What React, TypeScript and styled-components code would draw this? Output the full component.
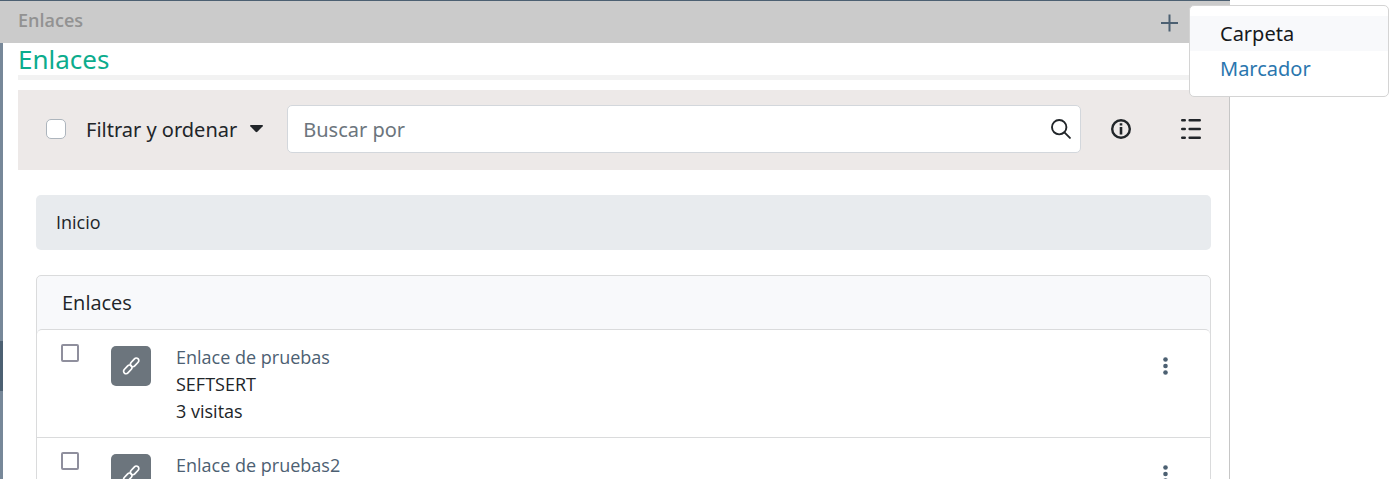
import React from 'react';
import styled, { createGlobalStyle } from 'styled-components';

const GlobalStyle = createGlobalStyle`
  *, *::before, *::after { box-sizing: border-box; }
  html { scrollbar-width: none; }
  body {
    margin: 0;
    background: #fff;
    color: #212529;
    font-family: "Open Sans", "Noto Sans", sans-serif;
    font-size: 18px;
    line-height: 27px;
  }
  button, input { font: inherit; color: inherit; }
`;

const controlFont = '"Noto Sans", "Open Sans", sans-serif';

const Panel = styled.div`
  position: relative;
  display: flex;
  flex-direction: column;
  min-height: 100vh;
  margin-right: 164px;
  border-top: 1px solid #4c6072;
`;

const TitleBar = styled.header`
  display: flex;
  align-items: center;
  justify-content: space-between;
  flex: none;
  height: 42px;
  padding: 0 51px 0 18px;
  background: #cbcbcb;
`;

const BarTitle = styled.span`
  height: 42px;
  color: #929292;
  font-size: 18px;
  font-weight: 600;
  line-height: 38px;
`;

const IconButton = styled.button<{ $color?: string }>`
  display: flex;
  align-items: center;
  justify-content: center;
  flex: none;
  padding: 0;
  border: 0;
  background: transparent;
  color: ${(p) => p.$color ?? '#212529'};
  cursor: pointer;
`;

const Menu = styled.nav`
  position: absolute;
  top: 4px;
  right: -159px;
  z-index: 2;
  display: flex;
  flex-direction: column;
  width: 200px;
  padding: 10px 0;
  border: 1px solid #d4d4d4;
  border-radius: 5px;
  background: #fff;
`;

const MenuLink = styled.a<{ $active?: boolean }>`
  padding: 0 30px;
  color: ${(p) => (p.$active ? '#16181b' : '#2a76ae')};
  background: ${(p) => (p.$active ? '#f8f9fb' : 'transparent')};
  font-family: ${controlFont};
  font-size: 20px;
  line-height: 35px;
  text-decoration: none;
`;

const Body = styled.div`
  display: flex;
  flex: 1;
  border-right: 1px solid #c6c6c6;
`;

const Rail = styled.div`
  flex: none;
  width: 3px;
  padding-top: 298px;
  background: #778899;
`;

const RailMark = styled.div`
  height: 50px;
  background: #4c6072;
`;

const Content = styled.main`
  flex: 1;
  min-width: 0;
  padding-left: 15px;
`;

const Heading = styled.h1`
  margin: 0 0 10px;
  border-bottom: 5px solid #f2f2f2;
  color: #0cac8d;
  font-family: ${controlFont};
  font-size: 26px;
  font-weight: 400;
  line-height: 32px;
`;

const Toolbar = styled.div`
  display: flex;
  align-items: center;
  height: 80px;
  padding: 0 28px 2px;
  background: #ede9e8;
`;

const Check = styled.input<{ $size: number; $border: string; $radius: number }>`
  appearance: none;
  flex: none;
  width: ${(p) => p.$size}px;
  height: ${(p) => p.$size}px;
  margin: 0;
  border: ${(p) => p.$border};
  border-radius: ${(p) => p.$radius}px;
  background: #fff;
`;

const FilterButton = styled.button`
  display: flex;
  align-items: center;
  gap: 13px;
  margin: 0 24px 0 20px;
  padding: 0;
  border: 0;
  background: transparent;
  font-family: ${controlFont};
  font-size: 20px;
  white-space: nowrap;
`;

const SearchBox = styled.form`
  display: flex;
  align-items: center;
  flex: 1;
  min-width: 0;
  height: 48px;
  margin-right: 30px;
  padding: 0 9px 0 15px;
  border: 1px solid #d3d7dc;
  border-radius: 5px;
  background: #fff;
`;

const SearchInput = styled.input`
  flex: 1;
  min-width: 0;
  padding: 0;
  border: 0;
  outline: 0;
  background: transparent;
  font-family: ${controlFont};
  font-size: 20px;
  &::placeholder { color: #6c757d; opacity: 1; }
`;

const Tools = styled.div`
  display: flex;
  gap: 50px;
`;

const Breadcrumb = styled.nav`
  margin: 25px 18px;
  padding: 14px 20px;
  border-radius: 5px;
  background: #e8ebee;
  a { color: #212529; text-decoration: none; }
`;

const Card = styled.section`
  margin: 0 18px;
  border: 1px solid #dadbdc;
  border-radius: 5px;
  background: #f8f9fb;
`;

const CardTitle = styled.h2`
  margin: 0;
  padding: 0 25px;
  font-size: 20px;
  font-weight: 400;
  line-height: 53px;
`;

const List = styled.ul`
  margin: 0;
  padding: 0;
  list-style: none;
  border-top: 1px solid #dadbdc;
  border-radius: 5px;
  background: #fff;
`;

const Row = styled.li`
  display: flex;
  align-items: flex-start;
  height: 108px;
  padding: 14px 37px 0 24px;
  border-bottom: 1px solid #dadbdc;
`;

const Thumb = styled.div`
  display: flex;
  align-items: center;
  justify-content: center;
  flex: none;
  width: 40px;
  height: 40px;
  margin: 2px 25px 0 32px;
  border-radius: 5px;
  background: #6c757d;
  color: #fff;
`;

const RowText = styled.div`
  flex: 1;
  min-width: 0;
  a { color: #4c6072; text-decoration: none; }
  p { margin: 0; }
`;

const RowAction = styled(IconButton)`
  width: 16px;
  height: 20px;
  margin-top: 12px;
`;

const PlusIcon = () => (
  <svg width="19" height="19" viewBox="0 0 19 19" fill="none" stroke="currentColor" strokeWidth="2">
    <path d="M9.5 1.5v17M1 10h17" />
  </svg>
);

const CaretIcon = () => (
  <svg width="13" height="8" viewBox="0 0 13 8" fill="currentColor">
    <path d="M.7 0h11.6q1 .3.4 1.2L7.4 6.7q-.9.9-1.8 0L.3 1.2Q-.2.3.7 0z" />
  </svg>
);

const SearchIcon = () => (
  <svg width="20" height="20" viewBox="0 0 20 20" fill="none" stroke="currentColor" strokeWidth="1.9" strokeLinecap="round">
    <circle cx="8.2" cy="8.2" r="7.2" />
    <path d="M13.4 13.4l5.5 5.5" />
  </svg>
);

const InfoIcon = () => (
  <svg width="20" height="20" viewBox="0 0 20 20" fill="none" stroke="currentColor" strokeWidth="2.4">
    <circle cx="10" cy="10" r="8.8" />
    <path d="M10 8v7.5M10 4.2v2.3" strokeWidth="2.6" />
  </svg>
);

const ListIcon = () => (
  <svg width="20" height="20" viewBox="0 0 20 20" fill="none" stroke="currentColor" strokeWidth="2.4" strokeLinecap="round">
    <path d="M1.2 1.3h2.6M8.6 1.3h10.2M1.2 10h2.6M8.6 10h10.2M1.2 18.7h2.6M8.6 18.7h10.2" />
  </svg>
);

const LinkIcon = () => (
  <svg width="18" height="18" viewBox="0 0 18 18" fill="none" stroke="currentColor" strokeWidth="1.7">
    <rect x="-5" y="-2.5" width="10" height="5" rx="2.5" transform="translate(12.6 5.4) rotate(-47)" />
    <rect x="-5" y="-2.5" width="10" height="5" rx="2.5" transform="translate(5.8 12.4) rotate(-47)" />
  </svg>
);

const DotsIcon = () => (
  <svg width="5" height="18" viewBox="0 0 5 18" fill="currentColor">
    <circle cx="2.5" cy="2.5" r="2.3" />
    <circle cx="2.5" cy="9" r="2.3" />
    <circle cx="2.5" cy="15.5" r="2.3" />
  </svg>
);

const links = [
  { title: 'Enlace de pruebas', description: 'SEFTSERT', visits: '3 visitas' },
  { title: 'Enlace de pruebas2' },
];

export default function App() {
  return (
    <>
      <GlobalStyle />
      <Panel>
        <TitleBar>
          <BarTitle>Enlaces</BarTitle>
          <IconButton $color="#4c6072" aria-label="Añadir"><PlusIcon /></IconButton>
        </TitleBar>
        <Menu>
          <MenuLink href="#carpeta" $active>Carpeta</MenuLink>
          <MenuLink href="#marcador">Marcador</MenuLink>
        </Menu>
        <Body>
          <Rail><RailMark /></Rail>
          <Content>
            <Heading>Enlaces</Heading>
            <Toolbar>
              <Check type="checkbox" aria-label="Seleccionar todo" $size={20} $border="1px solid #adb5bd" $radius={5} />
              <FilterButton>Filtrar y ordenar <CaretIcon /></FilterButton>
              <SearchBox>
                <SearchInput type="text" placeholder="Buscar por" aria-label="Buscar por" />
                <IconButton aria-label="Buscar"><SearchIcon /></IconButton>
              </SearchBox>
              <Tools>
                <IconButton aria-label="Información"><InfoIcon /></IconButton>
                <IconButton aria-label="Lista"><ListIcon /></IconButton>
              </Tools>
            </Toolbar>
            <Breadcrumb><a href="#inicio">Inicio</a></Breadcrumb>
            <Card>
              <CardTitle>Enlaces</CardTitle>
              <List>
                {links.map((link) => (
                  <Row key={link.title}>
                    <Check type="checkbox" aria-label={link.title} $size={18} $border="2px solid #8f8f9d" $radius={2} />
                    <Thumb><LinkIcon /></Thumb>
                    <RowText>
                      <a href="#enlace">{link.title}</a>
                      {link.description && <p>{link.description}</p>}
                      {link.visits && <p>{link.visits}</p>}
                    </RowText>
                    <RowAction $color="#4c6072" aria-label="Acciones"><DotsIcon /></RowAction>
                  </Row>
                ))}
              </List>
            </Card>
          </Content>
        </Body>
      </Panel>
    </>
  );
}
